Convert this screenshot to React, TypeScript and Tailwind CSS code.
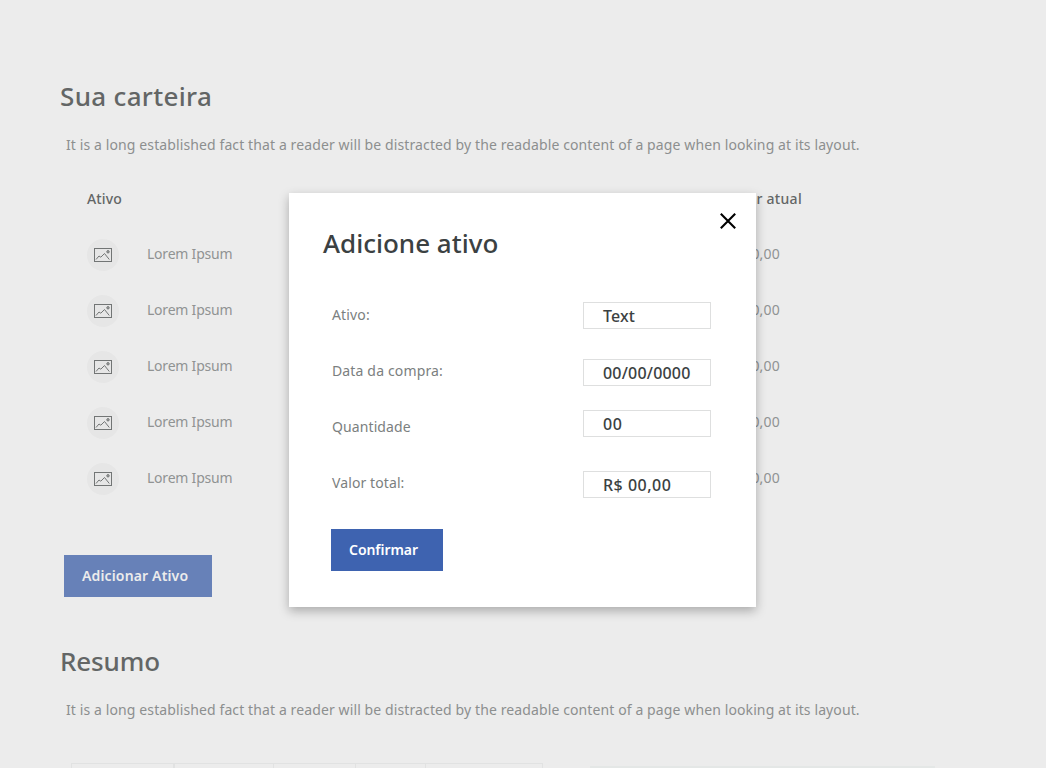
const assets = ["1", "2", "3", "4", "5"];

const LOREM =
  "It is a long established fact that a reader will be distracted by the readable content of a page when looking at its layout.";

function PictureIcon() {
  return (
    <svg width="18" height="14" viewBox="0 0 18 14" fill="none" stroke="#727575">
      <rect x="0.5" y="0.5" width="17" height="13" />
      <path d="M2 11.5 5 8l1.8 1.2L10.5 5.5l4.8 6" />
      <circle cx="14" cy="3.8" r="1.2" fill="#a5a7a7" />
    </svg>
  );
}

function AssetRow() {
  return (
    <div className="flex h-14 items-center">
      <div className="flex size-8 items-center justify-center rounded-full bg-[#e6e6e6]">
        <PictureIcon />
      </div>
      <span className="ml-7 -mt-[2px] text-sm leading-5 tracking-[-0.22px] text-[#909393]">Lorem Ipsum</span>
      <span className="ml-auto -mt-[2px] text-sm leading-5 tracking-[0.2px] text-[#909393]">R$ 00,00</span>
    </div>
  );
}

function Field({ label, value, labelClass, boxClass }: { label: string; value: string; labelClass: string; boxClass: string }) {
  return (
    <div className="flex h-14 items-start justify-between">
      <label className={`mt-[26px] text-sm leading-5 text-[#7b8080] ${labelClass}`}>{label}</label>
      <div className={`h-[27px] w-32 border border-[#dedfdf] pl-[19px] pt-px text-base font-medium leading-[25px] text-[#3b4142] ${boxClass}`}>
        {value}
      </div>
    </div>
  );
}

function Modal() {
  return (
    <section className="absolute left-[289px] top-[193px] flex h-[414px] w-[467px] flex-col bg-white shadow-[0_4px_10px_rgba(0,0,0,0.28)]">
      <button aria-label="Fechar" className="absolute right-5 top-5">
        <svg width="16" height="16" viewBox="0 0 16 16" stroke="#000" strokeWidth="2.1" fill="none">
          <path d="M.8.8l14.4 14.4M15.2.8.8 15.2" />
        </svg>
      </button>
      <h2 className="mt-[34px] pl-[34px] text-[26px] font-medium leading-8 text-[#3b4142]">Adicione ativo</h2>
      <div className="mt-5 pl-[43px] pr-[45px]">
        <Field label="Ativo:" value="Text" labelClass="tracking-[0.15px]" boxClass="mt-[23px] tracking-[0.1px]" />
        <Field label="Data da compra:" value="00/00/0000" labelClass="tracking-[0.15px]" boxClass="mt-6 tracking-[0.2px]" />
        <Field label="Quantidade" value="00" labelClass="tracking-[0.1px]" boxClass="mt-[19px] tracking-[0.6px]" />
        <Field label="Valor total:" value="R$ 00,00" labelClass="tracking-[0.1px]" boxClass="mt-6 tracking-[0.5px]" />
      </div>
      <button className="ml-[42px] mt-[26px] flex h-[42px] w-28 items-center bg-[#3e63b0] pl-[18px] text-sm font-semibold leading-5 tracking-[-0.05px] text-white">
        Confirmar
      </button>
    </section>
  );
}

export default function App() {
  return (
    <div className="relative h-[768px] w-[1046px] overflow-hidden whitespace-nowrap bg-[#ececec] font-['Noto_Sans',sans-serif]">
      <main className="pl-[60px] pt-20">
        <h1 className="text-[26px] font-medium leading-8 tracking-[0.33px] text-[#636666]">Sua carteira</h1>
        <p className="ml-1.5 mt-[23px] text-sm leading-5 tracking-[0.11px] text-[#8c8f8f]">{LOREM}</p>

        <div className="ml-[27px] mt-[34px] w-[715px]">
          <div className="flex justify-between text-sm font-medium leading-5 text-[#636666]">
            <span className="tracking-[0.15px]">Ativo</span>
            <span className="tracking-[0.3px]">Valor atual</span>
          </div>
          <div className="mt-[18px] w-[693px]">
            {assets.map((id) => (
              <AssetRow key={id} />
            ))}
          </div>
        </div>

        <button className="ml-1 mt-12 flex h-[42px] w-[148px] items-center bg-[#6781b8] pl-[18px] text-sm font-semibold leading-5 tracking-[0.15px] text-[#ececec]">
          Adicionar Ativo
        </button>

        <h1 className="mt-12 text-[26px] font-medium leading-8 tracking-[-0.15px] text-[#636666]">Resumo</h1>
        <p className="ml-1.5 mt-[23px] text-sm leading-5 tracking-[0.11px] text-[#8c8f8f]">{LOREM}</p>

        <div className="ml-[11px] mt-[43px] flex items-start">
          <div className="flex h-10 w-[472px] border border-[#e1e2e2]">
            <div className="w-[103px] border-r-2 border-[#e1e2e2]" />
            <div className="w-[99px] border-r border-[#e1e2e2]" />
            <div className="w-[82px] border-r border-[#e1e2e2]" />
            <div className="w-[70px] border-r border-[#e1e2e2]" />
          </div>
          <div className="ml-[47px] mt-[3px] h-10 w-[345px] bg-[#e4e7e6]" />
        </div>
      </main>
      <Modal />
    </div>
  );
}
